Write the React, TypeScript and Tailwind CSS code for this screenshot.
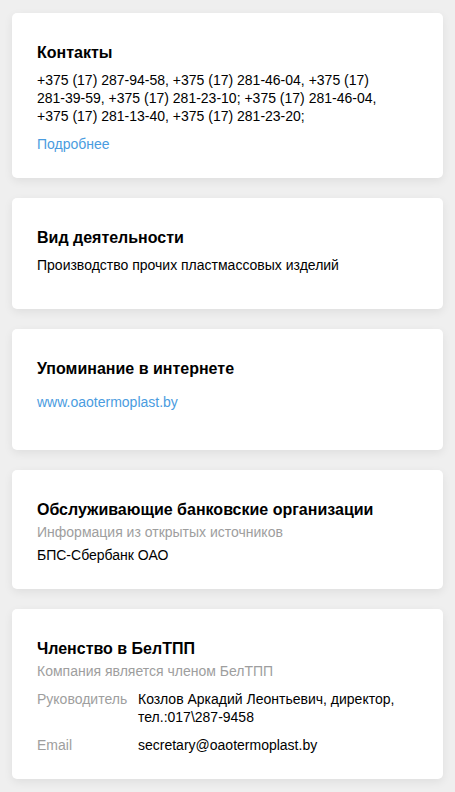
import React from 'react'

function Card({ title, children, className = '' }: { title: string; children: React.ReactNode; className?: string }) {
  return (
    <section
      className={`bg-white rounded-[5px] shadow-[0_3px_10px_rgba(0,0,0,0.07)] px-[25px] pt-[30px] ${className}`}
    >
      <h2 className="text-[16px] leading-[20px] font-bold text-black">{title}</h2>
      {children}
    </section>
  )
}

function Row({ label, children }: { label: string; children: React.ReactNode }) {
  return (
    <div className="flex text-[14px] leading-[18px]">
      <div className="w-[101px] shrink-0 text-[#9e9e9e]">{label}</div>
      <div className="text-black">{children}</div>
    </div>
  )
}

// phone lines as they wrap in the card
const phoneLines = [
  '+375 (17) 287-94-58, +375 (17) 281-46-04, +375 (17)',
  '281-39-59, +375 (17) 281-23-10; +375 (17) 281-46-04,',
  '+375 (17) 281-13-40, +375 (17) 281-23-20;',
]

export default function App() {
  return (
    <div className="min-h-screen bg-[#efefef] px-3 pt-[13px] pb-4 flex flex-col gap-5 font-['Liberation_Sans',Arial,sans-serif]">
      <Card title="Контакты" className="pb-[25px]">
        <p className="mt-2 text-[14px] leading-[18px] text-black">
          {phoneLines.map((line, i) => (
            <span key={i} className="block whitespace-nowrap">
              {line}
            </span>
          ))}
        </p>
        <a href="#" className="block mt-[10px] text-[14px] leading-[18px] text-[#4a9ce0]">
          Подробнее
        </a>
      </Card>

      <Card title="Вид деятельности" className="pb-[35px]">
        <p className="mt-2 text-[14px] leading-[18px] text-black">Производство прочих пластмассовых изделий</p>
      </Card>

      <Card title="Упоминание в интернете" className="pb-[39px]">
        <a href="#" className="block mt-[14px] text-[14px] leading-[18px] text-[#4a9ce0]">
          www.oaotermoplast.by
        </a>
      </Card>

      <Card title="Обслуживающие банковские организации" className="pb-[25px]">
        <p className="mt-[3px] text-[14px] leading-[18px] text-[#9e9e9e]">Информация из открытых источников</p>
        <p className="mt-[5px] text-[14px] leading-[18px] text-black">БПС-Сбербанк ОАО</p>
      </Card>

      <Card title="Членство в БелТПП" className="pb-[25px]">
        <p className="mt-[3px] text-[14px] leading-[18px] text-[#9e9e9e]">Компания является членом БелТПП</p>
        <div className="mt-[10px] flex flex-col gap-[10px]">
          <Row label="Руководитель">Козлов Аркадий Леонтьевич, директор, тел.:017\287-9458</Row>
          <Row label="Email">secretary@oaotermoplast.by</Row>
        </div>
      </Card>
    </div>
  )
}
